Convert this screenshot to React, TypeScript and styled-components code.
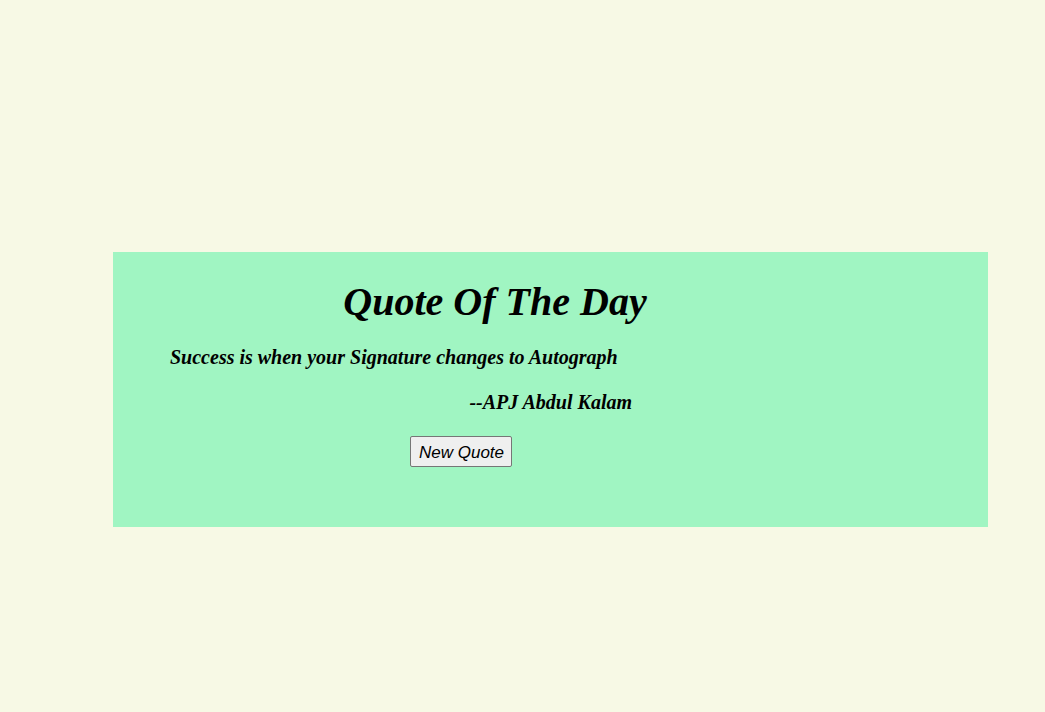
import React from "react";
import styled, { createGlobalStyle } from "styled-components";

const Global = createGlobalStyle`
  html, body { margin: 0; padding: 0; }
  body {
    background: #f7f9e5;
    font-family: "Liberation Serif", "Times New Roman", serif;
    width: 1045px;
    height: 712px;
    overflow: hidden;
  }
`;

const Page = styled.div`
  padding-top: 252px;
  padding-left: 113px;
`;

const Card = styled.section`
  box-sizing: border-box;
  width: 875px;
  height: 275px;
  background: #a0f5c2;
  padding: 24px 0 0 57px;
  display: flex;
  flex-direction: column;
`;

const Title = styled.h1`
  margin: 0;
  width: 650px;
  text-align: center;
  font-size: 40px;
  font-weight: bold;
  font-style: italic;
  line-height: 52px;
  color: #000;
`;

const Quote = styled.p`
  margin: 17px 0 0;
  font-size: 20px;
  font-weight: bold;
  font-style: italic;
  line-height: 24px;
`;

const Author = styled.p`
  margin: 21px 0 0;
  width: 462px;
  text-align: right;
  font-size: 20px;
  font-weight: bold;
  font-style: italic;
  line-height: 24px;
`;

const Button = styled.button`
  align-self: flex-start;
  margin: 22px 0 0 240px;
  box-sizing: border-box;
  height: 31px;
  padding: 3px 7px 0 8px;
  font-family: "Liberation Sans", Arial, sans-serif;
  font-style: italic;
  font-size: 17px;
  line-height: 20px;
  color: #000;
  background: #efefef;
  border: 1px solid #767676;
  border-radius: 2px;
`;

export default function App() {
  return (
    <>
      <Global />
      <Page>
        <Card>
          <Title>Quote Of The Day</Title>
          <Quote>Success is when your Signature changes to Autograph</Quote>
          <Author>--APJ Abdul Kalam</Author>
          <Button>New Quote</Button>
        </Card>
      </Page>
    </>
  );
}
